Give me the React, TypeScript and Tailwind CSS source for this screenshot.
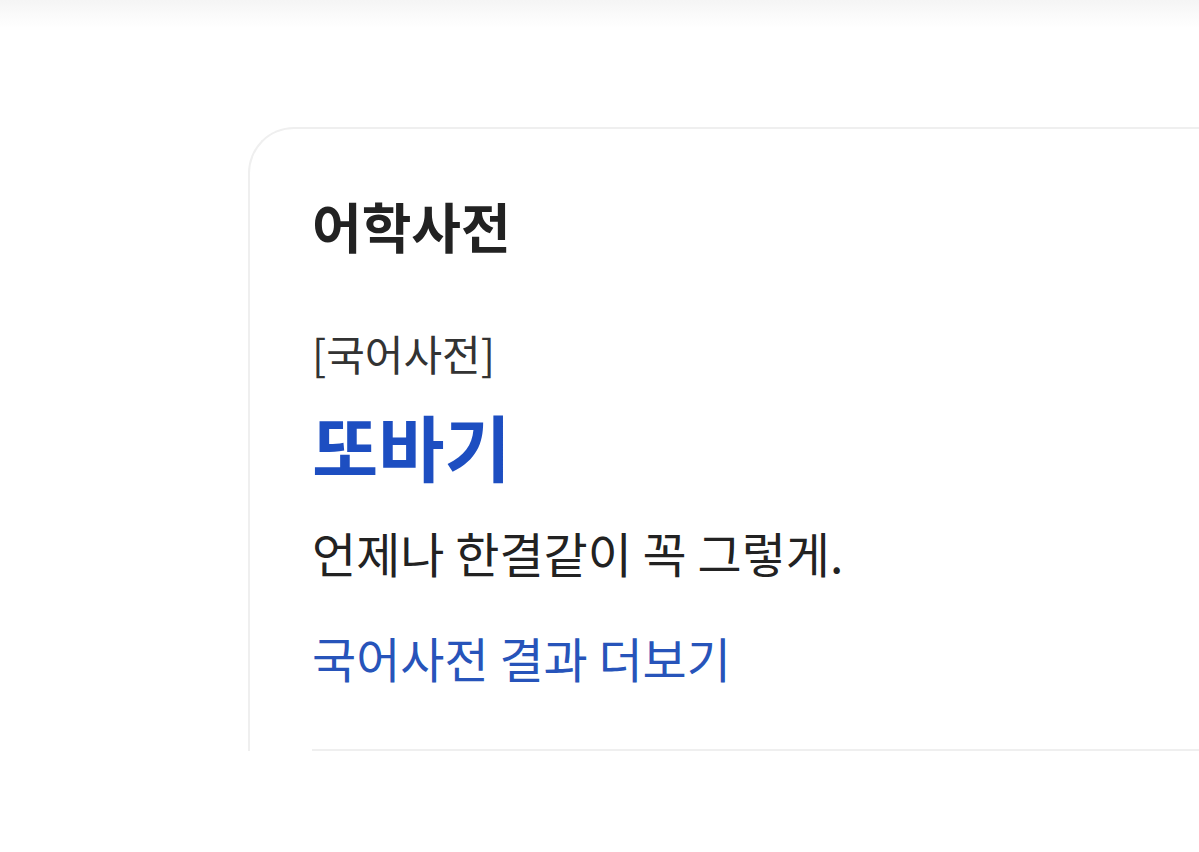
export default function App() {
  return (
    <div
      className="relative h-[852px] w-[1199px] overflow-hidden bg-white"
      style={{ fontFamily: '"Noto Sans CJK KR", "Noto Sans", sans-serif' }}
    >
      {/* top shade */}
      <div className="h-[28px] bg-gradient-to-b from-[#f5f5f5] to-white" />

      {/* dictionary card */}
      <div className="ml-[248px] mt-[99px] w-[1000px] rounded-tl-[46px] border-l-2 border-t-2 border-[#efefef] pl-[62px]">
        <div className="border-b-2 border-[#efefef] pt-[65px] pb-[62px]">
          <h2 className="text-[54px] font-semibold leading-[64px] text-[#222]">어학사전</h2>

          <p className="mt-[69px] text-[42px] leading-[52px] text-[#333]">[국어사전]</p>
          <p className="mt-[24px] text-[72px] font-bold leading-[84px] text-[#1d4ec1]">또바기</p>
          <p className="mt-[35px] text-[48px] leading-[60px] text-[#222]">언제나 한결같이 꼭 그렇게.</p>
          <a className="mt-[45px] block text-[48px] leading-[60px] text-[#2754ba]">국어사전 결과 더보기</a>
        </div>
      </div>
    </div>
  )
}
